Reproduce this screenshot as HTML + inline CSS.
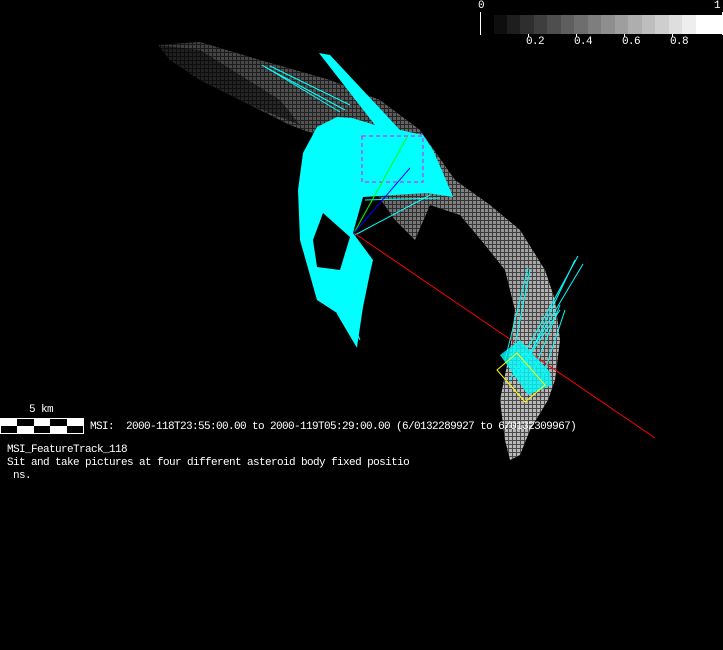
<!DOCTYPE html>
<html><head><meta charset="utf-8"><style>
html,body{margin:0;padding:0;background:#000;width:723px;height:650px;overflow:hidden}
.t{position:absolute;color:#fff;font-family:"Liberation Mono","DejaVu Sans Mono",monospace;font-size:11px;letter-spacing:-0.6px;line-height:13px;white-space:pre}
</style></head><body>
<svg width="723" height="650" style="position:absolute;left:0;top:0">
<defs>
<linearGradient id="g" x1="0" y1="0" x2="1" y2="0.6">
<stop offset="0" stop-color="#444"/><stop offset="0.5" stop-color="#666"/><stop offset="0.85" stop-color="#aaa"/><stop offset="1" stop-color="#ccc"/></linearGradient>
<pattern id="grid" width="4" height="4" patternUnits="userSpaceOnUse"><rect width="4" height="1" fill="#000"/><rect width="1" height="4" fill="#000"/></pattern>
</defs>
<polygon fill="url(#g)" opacity="0.9" points="158,45 200,42 260,60 330,80 380,100 420,130 455,180 490,205 520,230 545,270 555,300 560,340 555,380 548,400 530,430 520,455 510,460 505,440 500,400 510,350 515,310 505,270 485,245 460,215 430,205 415,240 395,220 360,170 330,140 290,125 250,105 200,80 170,60"/>
<polygon fill="#000" opacity="0.5" points="158,45 200,50 240,75 280,100 300,125 250,105 200,80 170,60"/>
<polygon fill="#aaa" points="520,300 540,290 555,320 552,380 540,400 530,395 535,350"/>
<polygon fill="url(#grid)" opacity="0.6" points="158,45 200,42 260,60 330,80 380,100 420,130 455,180 490,205 520,230 545,270 555,300 560,340 555,380 548,400 530,430 520,455 510,460 505,440 500,400 510,350 515,310 505,270 485,245 460,215 430,205 415,240 395,220 360,170 330,140 290,125 250,105 200,80 170,60"/>
<polygon fill="#0ff" points="319,53 330,55 400,130 423,135 433,150 443,173 453,197 427,193 363,197 353,233 373,260 370,273 363,307 357,347 337,313 317,300 300,240 298,190 303,153 317,127 337,117 352,118 375,125"/>
<polygon fill="#000" points="313,240 323,213 350,237 340,270 317,267"/>
<g stroke="#0ff" stroke-width="1" fill="none">
<line x1="262" y1="65" x2="340" y2="112"/><line x1="265" y1="67" x2="345" y2="110"/><line x1="270" y1="66" x2="350" y2="105"/>
<line x1="355" y1="235" x2="430" y2="195"/><line x1="365" y1="200" x2="440" y2="198"/>
<line x1="337" y1="313" x2="357" y2="347"/><line x1="345" y1="305" x2="360" y2="340"/>
</g>
<rect x="362" y="136" width="61" height="46" fill="none" stroke="#f0f" stroke-dasharray="4,3"/>
<line x1="354" y1="233" x2="655" y2="438" stroke="#f00"/>
<line x1="354" y1="233" x2="407" y2="137" stroke="#0f0"/>
<line x1="354" y1="233" x2="410" y2="168" stroke="#00f"/>
<g stroke="#0ff" fill="none">
<line x1="510" y1="380" x2="578" y2="256"/><line x1="515" y1="378" x2="583" y2="264"/><line x1="520" y1="375" x2="575" y2="260"/>
<line x1="505" y1="360" x2="528" y2="268"/><line x1="512" y1="360" x2="530" y2="270"/><line x1="520" y1="370" x2="560" y2="310"/>
<line x1="530" y1="380" x2="560" y2="305"/><line x1="540" y1="385" x2="565" y2="310"/>
</g>
<polygon fill="#0ff" opacity="0.8" points="500,355 520,340 550,372 552,385 528,395"/>
<polygon fill="none" stroke="#ff0" points="497,370 517,353 545,385 525,402"/>
<g>
<rect x="494" y="15" width="14" height="19" fill="#0e0e0e"/><rect x="507" y="15" width="14" height="19" fill="#1e1e1e"/><rect x="520" y="15" width="14" height="19" fill="#2e2e2e"/><rect x="534" y="15" width="14" height="19" fill="#3e3e3e"/><rect x="547" y="15" width="14" height="19" fill="#4e4e4e"/><rect x="561" y="15" width="14" height="19" fill="#5e5e5e"/><rect x="574" y="15" width="14" height="19" fill="#6e6e6e"/><rect x="588" y="15" width="14" height="19" fill="#7e7e7e"/><rect x="601" y="15" width="14" height="19" fill="#8e8e8e"/><rect x="615" y="15" width="14" height="19" fill="#9e9e9e"/><rect x="628" y="15" width="14" height="19" fill="#aeaeae"/><rect x="642" y="15" width="14" height="19" fill="#bebebe"/><rect x="655" y="15" width="14" height="19" fill="#cecece"/><rect x="669" y="15" width="14" height="19" fill="#dedede"/><rect x="682" y="15" width="14" height="19" fill="#eeeeee"/><rect x="696" y="15" width="26" height="19" fill="#fff"/>
</g>
<line x1="480.5" y1="12" x2="480.5" y2="35" stroke="#fff"/>
<line x1="722.5" y1="12" x2="722.5" y2="35" stroke="#fff"/>
<g stroke="#fff"><line x1="528.5" y1="34" x2="528.5" y2="37"/><line x1="576.5" y1="34" x2="576.5" y2="37"/><line x1="624.5" y1="34" x2="624.5" y2="37"/><line x1="672.5" y1="34" x2="672.5" y2="37"/></g>
<rect x="0" y="418" width="84" height="16" fill="#fff"/>
<g fill="#000"><rect x="17" y="419" width="17" height="7"/><rect x="50" y="419" width="17" height="7"/><rect x="1" y="426" width="16" height="7"/><rect x="34" y="426" width="16" height="7"/><rect x="67" y="426" width="16" height="7"/></g>
</svg>
<div class="t" style="left:478px;top:0px">0</div>
<div class="t" style="left:714px;top:0px">1</div>
<div class="t" style="left:526px;top:36px">0.2</div>
<div class="t" style="left:574px;top:36px">0.4</div>
<div class="t" style="left:622px;top:36px">0.6</div>
<div class="t" style="left:670px;top:36px">0.8</div>
<div class="t" style="left:29px;top:404px">5 km</div>
<div class="t" style="left:90px;top:421px">MSI:  2000-118T23:55:00.00 to 2000-119T05:29:00.00 (6/0132289927 to 6/0132309967)</div>
<div class="t" style="left:7px;top:444px">MSI_FeatureTrack_118
Sit and take pictures at four different asteroid body fixed positio
 ns.</div>
</body></html>
